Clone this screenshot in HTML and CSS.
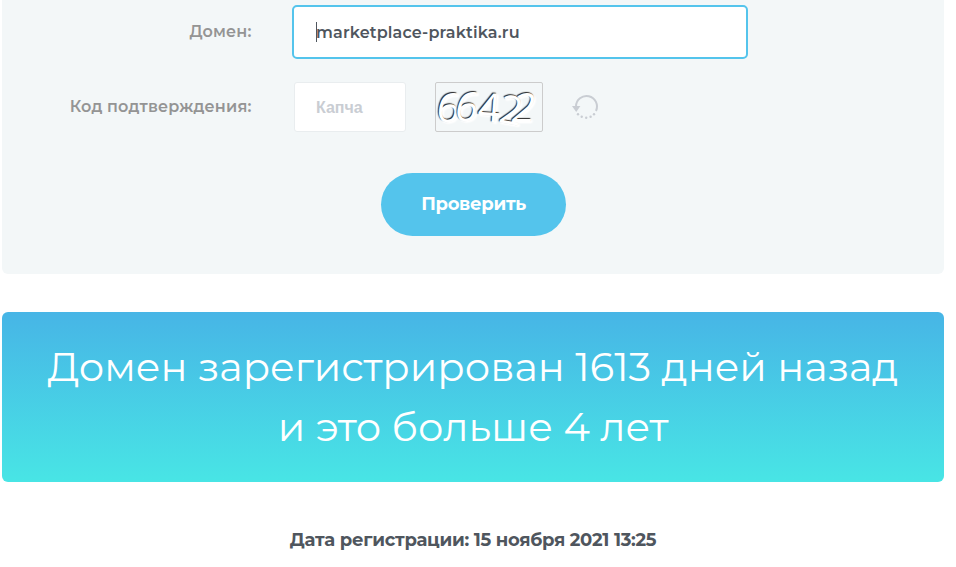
FILE: index.html
```html
<!DOCTYPE html>
<html lang="ru">
<head>
    <meta charset="UTF-8">
    <meta name="viewport" content="width=device-width, initial-scale=1.0">
    <title>Проверка возраста домена</title>
    <link rel="stylesheet" href="styles.css">
</head>
<body>
    <form class="form">
        <div class="row">
            <label class="label" for="domain">Домен:</label>
            <div class="field">
                <input class="input input-domain" id="domain" type="text" value="marketplace-praktika.ru">
                <i class="caret"></i>
            </div>
        </div>
        <div class="row row-captcha">
            <label class="label" for="captcha">Код подтверждения:</label>
            <input class="input input-captcha" id="captcha" type="text" placeholder="Капча">
            <div class="captcha">
                <span class="d1">6</span><span class="d2">6</span><span class="d3">4</span><span class="d4">2</span><span class="d5">2</span>
            </div>
            <svg class="refresh" width="28" height="26" viewBox="0 0 28 26">
                <path d="M4 12.500A10.500 10.500 0 1 1 24 17" fill="none" stroke="#c9cdd3" stroke-width="2"/>
                <path d="M0 12h8.400l-4.200 6z" fill="#c9cdd3"/>
                <g fill="#c9cdd3">
                    <circle cx="6" cy="20.300" r="1.200"/>
                    <circle cx="9.700" cy="22.800" r="1.200"/>
                    <circle cx="14.200" cy="23.800" r="1.200"/>
                    <circle cx="18.600" cy="22.800" r="1.200"/>
                    <circle cx="22" cy="20.200" r="1.200"/>
                </g>
            </svg>
        </div>
        <button class="btn" type="button">Проверить</button>
    </form>

    <div class="result">
        <div>Домен зарегистрирован 1613 дней назад</div>
        <div>и это больше 4 лет</div>
    </div>

    <p class="date">Дата регистрации: 15 ноября 2021 13:25</p>
</body>
</html>
```

FILE: styles.css
```css
* {
    box-sizing: border-box;
}
body {
    width: 942px;
    margin: 0 0 0 2px;
    font-family: Montserrat, Inter, "Open Sans", sans-serif;
    color: #4f565e;
    background: #fff;
}
.form {
    height: 274px;
    padding-top: 5px;
    border-radius: 0 0 6px 6px;
    background: #f3f7f8;
}
.row {
    display: flex;
    align-items: center;
    height: 54px;
}
.row-captcha {
    height: 50px;
    margin-top: 23px;
}
.label {
    width: 249.5px;
    margin-right: 40.5px;
    padding-bottom: 2px;
    font-size: 16px;
    font-weight: 600;
    letter-spacing: 0.15px;
    text-align: right;
    white-space: nowrap;
    color: #949494;
}
.field {
    position: relative;
}
.input {
    display: block;
    padding: 0 0 0 21px;
    border: 1px solid #e9edef;
    border-radius: 3px;
    outline: none;
    font-family: inherit;
    font-size: 16px;
    font-weight: 600;
    color: #4f565e;
    background: #fff;
}
.input-domain {
    width: 456px;
    height: 54px;
    padding-left: 22px;
    border: 2px solid #54c4ec;
    border-radius: 5px;
    letter-spacing: 0.16px;
}
.caret {
    position: absolute;
    top: 17px;
    left: 24px;
    width: 1px;
    height: 20px;
    background: #4f565e;
}
.input-captcha {
    width: 112px;
    height: 50px;
    margin-left: 2px;
}
.input-captcha::placeholder {
    font-family: "Liberation Sans", sans-serif;
    font-weight: 700;
    color: #c9cdd3;
    opacity: 1;
}
.captcha {
    display: flex;
    width: 108px;
    height: 50px;
    margin-left: 29px;
    padding-left: 1px;
    border: 1px solid #ccc;
    border-radius: 2px;
    font-family: "Open Sans", sans-serif;
    font-size: 40px;
    font-weight: 400;
    line-height: 48px;
    color: #fff;
    text-shadow: -1px -1px 1px #222, 1px 1px 2px #fff, 2px 1px 2px #fff;
}
.captcha span {
    width: 19px;
}
/* у каждой цифры свой наклон */
.captcha .d1 {
    transform: skewX(-6deg);
}
.captcha .d2 {
    transform: translateY(-1px) skewX(-10deg);
}
.captcha .d3 {
    transform: translateX(3px) rotate(4deg);
}
.captcha .d4 {
    transform: translate(6px, 2px) rotate(10deg);
}
.captcha .d5 {
    transform: skewX(-12deg);
}
.refresh {
    margin-left: 29px;
}
.btn {
    display: block;
    width: 185px;
    height: 63px;
    margin: 41px auto 0 379px;
    padding: 0 0 2px;
    border: 0;
    border-radius: 32px;
    font-family: inherit;
    font-size: 18px;
    font-weight: 700;
    letter-spacing: -0.3px;
    color: #fff;
    background: #54c4ec;
}
.result {
    height: 170px;
    margin-top: 38px;
    padding-top: 25px;
    border-radius: 6px;
    font-size: 40px;
    line-height: 60px;
    text-align: center;
    white-space: nowrap;
    color: #fff;
    background: linear-gradient(to bottom, #47b5e6, #48e5e5);
}
.date {
    margin: 47px 0 0;
    font-size: 18px;
    font-weight: 700;
    line-height: 22px;
    letter-spacing: -0.28px;
    text-align: center;
}
```
